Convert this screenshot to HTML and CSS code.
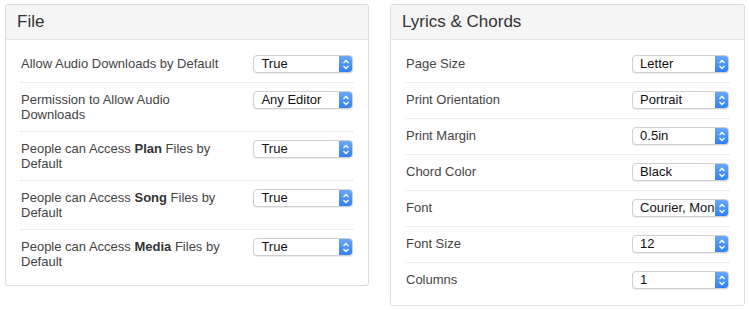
FILE: index.html
```html
<!DOCTYPE html>
<html>
<head>
<meta charset="utf-8">
<link rel="stylesheet" href="styles.css">
</head>
<body>
<div class="page">
  <section class="panel panel-file">
    <header class="panel-head">File</header>
    <div class="panel-body">
      <div class="row">
        <div class="label">Allow Audio Downloads by Default</div>
        <div class="select"><span class="val">True</span><span class="btn"><svg width="8" height="11" viewBox="0 0 8 11"><path d="M1.5 4 L4 1.5 L6.5 4 M1.5 7 L4 9.5 L6.5 7" fill="none" stroke="#fff" stroke-width="1.3"/></svg></span></div>
      </div>
      <div class="row">
        <div class="label">Permission to Allow Audio Downloads</div>
        <div class="select"><span class="val">Any Editor</span><span class="btn"><svg width="8" height="11" viewBox="0 0 8 11"><path d="M1.5 4 L4 1.5 L6.5 4 M1.5 7 L4 9.5 L6.5 7" fill="none" stroke="#fff" stroke-width="1.3"/></svg></span></div>
      </div>
      <div class="row">
        <div class="label">People can Access <b>Plan</b> Files by Default</div>
        <div class="select"><span class="val">True</span><span class="btn"><svg width="8" height="11" viewBox="0 0 8 11"><path d="M1.5 4 L4 1.5 L6.5 4 M1.5 7 L4 9.5 L6.5 7" fill="none" stroke="#fff" stroke-width="1.3"/></svg></span></div>
      </div>
      <div class="row">
        <div class="label">People can Access <b>Song</b> Files by Default</div>
        <div class="select"><span class="val">True</span><span class="btn"><svg width="8" height="11" viewBox="0 0 8 11"><path d="M1.5 4 L4 1.5 L6.5 4 M1.5 7 L4 9.5 L6.5 7" fill="none" stroke="#fff" stroke-width="1.3"/></svg></span></div>
      </div>
      <div class="row">
        <div class="label">People can Access <b>Media</b> Files by Default</div>
        <div class="select"><span class="val">True</span><span class="btn"><svg width="8" height="11" viewBox="0 0 8 11"><path d="M1.5 4 L4 1.5 L6.5 4 M1.5 7 L4 9.5 L6.5 7" fill="none" stroke="#fff" stroke-width="1.3"/></svg></span></div>
      </div>
    </div>
  </section>
  <section class="panel panel-lyrics">
    <header class="panel-head">Lyrics &amp; Chords</header>
    <div class="panel-body">
      <div class="row">
        <div class="label">Page Size</div>
        <div class="select"><span class="val">Letter</span><span class="btn"><svg width="8" height="11" viewBox="0 0 8 11"><path d="M1.5 4 L4 1.5 L6.5 4 M1.5 7 L4 9.5 L6.5 7" fill="none" stroke="#fff" stroke-width="1.3"/></svg></span></div>
      </div>
      <div class="row">
        <div class="label">Print Orientation</div>
        <div class="select"><span class="val">Portrait</span><span class="btn"><svg width="8" height="11" viewBox="0 0 8 11"><path d="M1.5 4 L4 1.5 L6.5 4 M1.5 7 L4 9.5 L6.5 7" fill="none" stroke="#fff" stroke-width="1.3"/></svg></span></div>
      </div>
      <div class="row">
        <div class="label">Print Margin</div>
        <div class="select"><span class="val">0.5in</span><span class="btn"><svg width="8" height="11" viewBox="0 0 8 11"><path d="M1.5 4 L4 1.5 L6.5 4 M1.5 7 L4 9.5 L6.5 7" fill="none" stroke="#fff" stroke-width="1.3"/></svg></span></div>
      </div>
      <div class="row">
        <div class="label">Chord Color</div>
        <div class="select"><span class="val">Black</span><span class="btn"><svg width="8" height="11" viewBox="0 0 8 11"><path d="M1.5 4 L4 1.5 L6.5 4 M1.5 7 L4 9.5 L6.5 7" fill="none" stroke="#fff" stroke-width="1.3"/></svg></span></div>
      </div>
      <div class="row">
        <div class="label">Font</div>
        <div class="select"><span class="val">Courier, Monospace</span><span class="btn"><svg width="8" height="11" viewBox="0 0 8 11"><path d="M1.5 4 L4 1.5 L6.5 4 M1.5 7 L4 9.5 L6.5 7" fill="none" stroke="#fff" stroke-width="1.3"/></svg></span></div>
      </div>
      <div class="row">
        <div class="label">Font Size</div>
        <div class="select"><span class="val">12</span><span class="btn"><svg width="8" height="11" viewBox="0 0 8 11"><path d="M1.5 4 L4 1.5 L6.5 4 M1.5 7 L4 9.5 L6.5 7" fill="none" stroke="#fff" stroke-width="1.3"/></svg></span></div>
      </div>
      <div class="row">
        <div class="label">Columns</div>
        <div class="select"><span class="val">1</span><span class="btn"><svg width="8" height="11" viewBox="0 0 8 11"><path d="M1.5 4 L4 1.5 L6.5 4 M1.5 7 L4 9.5 L6.5 7" fill="none" stroke="#fff" stroke-width="1.3"/></svg></span></div>
      </div>
    </div>
  </section>
</div>
</body>
</html>
```
FILE: styles.css
```css
html, body {
  margin: 0;
  background: #fff;
}
body {
  font-family: "Liberation Sans", Arial, sans-serif;
  color: #444;
}
.page {
  display: flex;
  align-items: flex-start;
  padding: 4px 0 0 5px;
  gap: 21px;
}
.panel {
  border: 1px solid #dedede;
  border-radius: 3px;
  background: #fff;
  box-sizing: border-box;
}
.panel-file { width: 364px; }
.panel-lyrics { width: 355px; }
.panel-head {
  height: 35px;
  box-sizing: border-box;
  background: #f5f5f5;
  border-bottom: 1px solid #e3e3e3;
  border-radius: 3px 3px 0 0;
  padding: 7px 11px 0;
  font-size: 17px;
  color: #333;
  line-height: 20px;
}
.panel-body {
  padding: 7px 15px 7px;
}
.row {
  display: flex;
  align-items: flex-start;
  padding: 8px 0 9px;
}
.row + .row {
  border-top: 1px dotted #dcdcdc;
}
.label {
  flex: 0 0 70%;
  box-sizing: border-box;
  padding-right: 28px;
  padding-top: 1px;
  font-size: 13px;
  line-height: 15px;
}
.label b { font-weight: bold; color: #333; }
.select {
  flex: 1 1 auto;
  height: 18px;
  box-sizing: border-box;
  display: flex;
  border: 1px solid #cfcfcf;
  border-radius: 4px;
  box-shadow: 0 1px 1px rgba(0,0,0,0.08);
  overflow: hidden;
  background: #fff;
}
.val {
  flex: 1 1 auto;
  min-width: 0;
  overflow: hidden;
  white-space: nowrap;
  font-size: 13px;
  line-height: 16px;
  color: #111;
  padding-left: 7px;
}
.btn {
  flex: 0 0 14px;
  display: flex;
  align-items: center;
  justify-content: center;
  background: linear-gradient(#6eaaf8, #2f7ef1);
  margin: -1px -1px -1px 0;
  border-radius: 0 4px 4px 0;
}
```
